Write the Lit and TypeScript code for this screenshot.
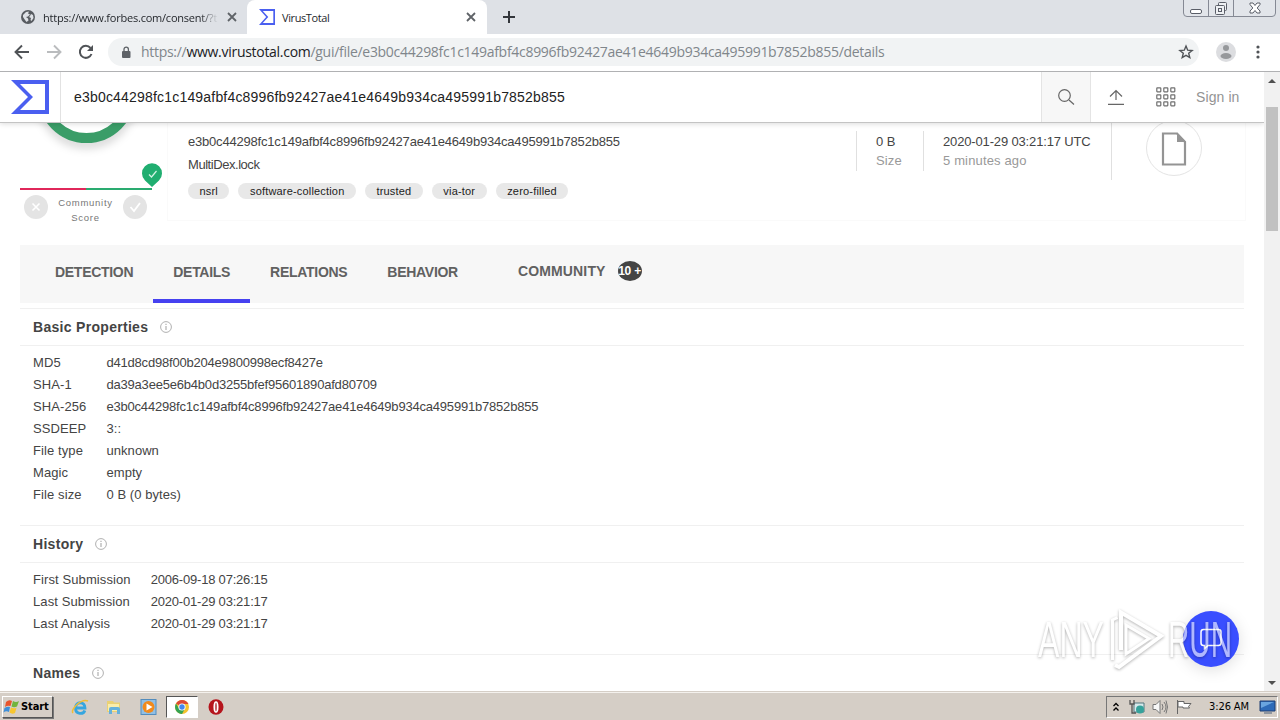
import { LitElement, css, html, svg } from 'lit';
import { customElement, property } from 'lit/decorators.js';

const HASH = 'e3b0c44298fc1c149afbf4c8996fb92427ae41e4649b934ca495991b7852b855';

const infoIcon = html`
  <svg class="info" width="12" height="12" viewBox="0 0 12 12" fill="none" stroke="#b0b0b0">
    <circle cx="6" cy="6" r="5.4" />
    <path d="M6 5v4M6 2.8v1.2" stroke-width="1.2" />
  </svg>
`;

const sigma = (width: number, height: number) => html`
  <svg width=${width} height=${height} viewBox="0 0 38 34" preserveAspectRatio="none">
    <path fill="#4a5ff0" fill-rule="evenodd" d="M0 0H38V34H0L17 17ZM9 4L22 17L9 30H34V4Z" />
  </svg>
`;

@customElement('browser-bar')
class BrowserBar extends LitElement {
  static styles = css`
    :host {
      display: block;
      height: 72px;
      font-family: 'Open Sans', 'Noto Sans', sans-serif;
      color: #25282d;
    }
    svg {
      display: block;
      flex: none;
    }
    .tabs {
      display: flex;
      height: 34px;
      background: #dee1e6;
      overflow: hidden;
      font-size: 11px;
    }
    .tab {
      display: flex;
      align-items: center;
      box-sizing: border-box;
      height: 34px;
    }
    .first {
      width: 247px;
      padding-left: 21px;
    }
    .first .name {
      width: 175px;
      margin: 0 9px 0 8px;
      white-space: nowrap;
      letter-spacing: -0.22px;
      mask-image: linear-gradient(90deg, #000 90%, transparent);
    }
    .active {
      width: 240px;
      padding-left: 12px;
      background: #fff;
      border-radius: 8px 8px 0 0;
    }
    .active .name {
      width: 177px;
      margin: 0 7px 0 7px;
      letter-spacing: -0.4px;
    }
    .plus {
      margin: 11px 0 0 16px;
    }
    .controls {
      display: flex;
      box-sizing: border-box;
      margin: -2px 4px 0 auto;
      width: 93px;
      height: 19px;
      border: 1px solid #858994;
      border-radius: 0 0 4px 4px;
      background: #e2e5ea;
    }
    .controls span {
      display: flex;
      align-items: center;
      justify-content: center;
      width: 24px;
      border-right: 1px solid #858994;
    }
    .controls span:last-child {
      flex: 1;
      border: 0;
    }
    .toolbar {
      display: flex;
      align-items: center;
      box-sizing: border-box;
      height: 38px;
      padding: 0 12px 1px 14px;
      background: #fff;
      border-bottom: 1px solid #b0b1b3;
    }
    .toolbar > svg {
      margin-right: 16px;
    }
    .toolbar > .reload {
      margin-right: 14px;
    }
    .address {
      display: flex;
      align-items: center;
      box-sizing: border-box;
      width: 1095px;
      height: 28px;
      padding: 0 5px 0 13px;
      border-radius: 14px;
      background: #f1f3f4;
      font-size: 14px;
      color: #80868b;
    }
    .url {
      flex: 1;
      margin-left: 10px;
      padding-bottom: 2px;
      white-space: nowrap;
      letter-spacing: -0.29px;
    }
    .url b {
      font-weight: 400;
      color: #202124;
    }
    .toolbar > .avatar {
      margin: 0 17px 0 17px;
    }
    .toolbar > .dots {
      margin: 0 0 0 -5px;
    }
  `;

  render() {
    const close = html`
      <svg width="10" height="10" viewBox="0 0 10 10" stroke="#5f6368" stroke-width="1.8">
        <path d="M1 1l8 8M9 1l-8 8" />
      </svg>
    `;
    return html`
      <div class="tabs">
        <div class="tab first">
          <svg width="14" height="14" viewBox="0 0 14 14">
            <circle cx="7" cy="7" r="7" fill="#585c61" />
            <path fill="#dee1e6" d="M2 5l3-3 3-.5-1 2 2 1-2 2-2 .5 2 1.500.5 2-2 1.500-1.500-2L2 7zM10 4l2 1 .5 3-2 3-1-1 .5-2-2-1 1-1z" />
          </svg>
          <span class="name">https://www.forbes.com/consent/?t</span>
          ${close}
        </div>
        <div class="tab active">
          ${sigma(16, 16)}
          <span class="name">VirusTotal</span>
          ${close}
        </div>
        <svg class="plus" width="12" height="12" viewBox="0 0 12 12" stroke="#33363b" stroke-width="2">
          <path d="M6 0v12M0 6h12" />
        </svg>
        <div class="controls">
          <span>
            <svg width="14" height="16" viewBox="0 0 14 16" fill="#fff" stroke="#5a5e68">
              <rect x="1.500" y="9.500" width="11" height="4" rx="1.500" />
            </svg>
          </span>
          <span>
            <svg width="14" height="16" viewBox="0 0 14 16" fill="#eef0f3" stroke="#5a5e68">
              <rect x="4.500" y="2.500" width="8" height="8" rx="1" />
              <rect x="1.500" y="5.500" width="9" height="9" rx="1" />
              <rect x="4.500" y="8.500" width="3" height="3" />
            </svg>
          </span>
          <span>
            <svg width="14" height="16" viewBox="0 0 14 16" fill="#fff" stroke="#5a5e68">
              <path d="M2 3h3l2 2.500L9 3h3v1.500L9.200 8l2.800 3v2H9l-2-2.500L5 13H2v-2l2.800-3L2 4.500z" />
            </svg>
          </span>
        </div>
      </div>
      <div class="toolbar">
        <svg width="16" height="16" viewBox="0 0 16 16" fill="none" stroke="#505357" stroke-width="1.900">
          <path d="M15 8H2M8 1.500L1.500 8L8 14.500" />
        </svg>
        <svg width="16" height="16" viewBox="0 0 16 16" fill="none" stroke="#babcbe" stroke-width="1.900">
          <path d="M1 8h13M8 1.500L14.500 8L8 14.500" />
        </svg>
        <svg class="reload" width="16" height="16" viewBox="0 0 16 16" fill="none" stroke="#505357" stroke-width="2">
          <path d="M13.500 10A6 6 0 1 1 12.500 4" />
          <path d="M9 7h6V1z" fill="#505357" stroke="none" />
        </svg>
        <div class="address">
          <svg width="10" height="13" viewBox="0 0 10 13">
            <rect x="1" y="5" width="8.500" height="7" rx="1" fill="#5f6368" />
            <path d="M3 5V3.300a2.200 2.200 0 0 1 4.400 0V5" fill="none" stroke="#5f6368" stroke-width="1.300" />
          </svg>
          <span class="url">https://<b>www.virustotal.com</b>/gui/file/${HASH}/details</span>
          <svg width="16" height="16" viewBox="0 0 16 16" fill="none" stroke="#505357" stroke-width="1.400">
            <path d="M8 2l1.700 4.200 4.400.3-3.400 2.800 1.100 4.300L8 11.300l-3.800 2.300 1.100-4.300L1.900 6.500l4.400-.3z" />
          </svg>
        </div>
        <svg class="avatar" width="20" height="20" viewBox="0 0 20 20">
          <circle cx="10" cy="10" r="10" fill="#dcdde0" />
          <circle cx="10" cy="6" r="3" fill="#96989b" />
          <ellipse cx="10" cy="14" rx="5.500" ry="3" fill="#96989b" />
        </svg>
        <svg class="dots" width="20" height="16" viewBox="0 0 20 16" fill="#505357">
          <circle cx="10" cy="3" r="1.600" />
          <circle cx="10" cy="8" r="1.600" />
          <circle cx="10" cy="13" r="1.600" />
        </svg>
      </div>
    `;
  }
}

@customElement('search-header')
class SearchHeader extends LitElement {
  static styles = css`
    :host {
      display: flex;
      box-sizing: border-box;
      height: 51px;
      background: #fff;
      border-bottom: 1px solid #c4c4c4;
      box-shadow: 0 1px 5px rgba(0, 0, 0, 0.14);
      position: relative;
      font-family: 'Liberation Sans', Arial, sans-serif;
    }
    svg {
      display: block;
    }
    .logo {
      box-sizing: border-box;
      width: 61px;
      padding: 8px 0 0 11px;
      border-right: 1px solid #e2e2e2;
    }
    .query {
      flex: 1;
      padding-left: 13px;
      font-size: 14px;
      line-height: 50px;
      letter-spacing: 0.19px;
      color: #222;
    }
    .search {
      display: flex;
      align-items: center;
      justify-content: center;
      width: 48px;
      background: #f7f7f7;
      border: solid #e4e4e4;
      border-width: 0 1px;
    }
    .actions {
      display: flex;
      align-items: center;
      width: 173px;
      font-size: 14px;
      letter-spacing: 0.1px;
      color: #939393;
    }
    .upload {
      margin-left: 17px;
    }
    .apps {
      margin: 0 20px 0 32px;
    }
  `;

  render() {
    const cells = [0, 1, 2].flatMap((row) => [0, 1, 2].map((col) => ({ x: col * 7 + 0.5, y: row * 7 + 0.5 })));
    return html`
      <div class="logo">${sigma(38, 34)}</div>
      <div class="query">${HASH}</div>
      <div class="search">
        <svg width="18" height="18" viewBox="0 0 18 18" fill="none" stroke="#666" stroke-width="1.200">
          <circle cx="7.500" cy="7.500" r="5.800" />
          <path d="M12 12l5 4.500" />
        </svg>
      </div>
      <div class="actions">
        <svg class="upload" width="16" height="16" viewBox="0 0 16 16" fill="none" stroke="#666" stroke-width="1.200">
          <path d="M8 11V1.500M2 7.500l6-6 6 6M0 15.400h16" />
        </svg>
        <svg class="apps" width="20" height="20" viewBox="0 0 20 20" fill="none" stroke="#707070" stroke-width="1.200">
          ${cells.map((c) => svg`<rect x=${c.x + 0.3} y=${c.y + 0.3} width="4" height="4" rx=".5" />`)}
        </svg>
        <span>Sign in</span>
      </div>
    `;
  }
}

@customElement('file-summary')
class FileSummary extends LitElement {
  static styles = css`
    :host {
      display: flex;
      height: 122px;
      padding-left: 20px;
      font-family: 'Liberation Sans', Arial, sans-serif;
      font-size: 13px;
      color: #444;
    }
    svg {
      display: block;
    }
    .score {
      width: 147px;
    }
    .bar {
      display: flex;
      align-items: flex-start;
      justify-content: space-between;
      width: 123px;
      padding: 4px 0 0 4px;
      font-size: 9.5px;
      line-height: 15px;
      letter-spacing: 0.72px;
      text-align: center;
      color: #777;
    }
    .card {
      display: flex;
      box-sizing: border-box;
      width: 1079px;
      height: 98px;
      padding-left: 20px;
      border: 1px solid #fafafa;
      border-top: 0;
    }
    .names {
      flex: 1;
      padding-top: 10px;
      line-height: 17px;
    }
    .hash {
      letter-spacing: -0.2px;
    }
    .file {
      margin-top: 6px;
      letter-spacing: -0.45px;
    }
    .tags {
      display: flex;
      gap: 9px;
      margin-top: 10px;
    }
    .tag {
      padding: 0 11.5px;
      border-radius: 8px;
      background: #e8e8e8;
      font-size: 11px;
      line-height: 16px;
      letter-spacing: 0.18px;
      color: #222;
    }
    .fact {
      box-sizing: border-box;
      height: 40px;
      margin-top: 8px;
      padding: 1px 0 0 19px;
      border-left: 1px solid #e0e0e0;
      line-height: 19px;
    }
    .fact div + div {
      color: #999;
      letter-spacing: 0.15px;
    }
    .size {
      width: 67px;
    }
    .date {
      width: 188px;
      letter-spacing: -0.15px;
    }
    .kind {
      box-sizing: border-box;
      width: 134px;
      height: 57px;
      padding-left: 34px;
      border-left: 1px solid #e0e0e0;
    }
  `;

  render() {
    const tags = ['nsrl', 'software-collection', 'trusted', 'via-tor', 'zero-filled'];
    return html`
      <div class="score">
        <svg width="147" height="68" viewBox="20 123 147 68">
          <defs>
            <filter id="soft" x="-20%" y="-20%" width="140%" height="140%">
              <feGaussianBlur stdDeviation="4" />
            </filter>
          </defs>
          <circle cx="86.500" cy="99" r="45" fill="none" stroke="#000" stroke-opacity=".16" stroke-width="9" filter="url(#soft)" />
          <circle cx="86.500" cy="94" r="44" fill="#fff" stroke="#3a9d68" stroke-width="10" />
          <path d="M20 189h66" stroke="#e0275a" stroke-width="2" />
          <path d="M86 189h66" stroke="#2aab70" stroke-width="2" />
          <path d="M152 187l-7-6.500a10 10 0 1 1 14 0z" fill="#20ae70" />
          <path d="M149 174.500l2.500 2.500 5-6" fill="none" stroke="#d5f3e4" stroke-width="1.200" />
        </svg>
        <div class="bar">
          <svg width="24" height="24" viewBox="0 0 24 24" stroke="#fff" stroke-width="1.600">
            <circle cx="12" cy="12" r="12" fill="#e4e4e4" stroke="none" />
            <path d="M8.500 8.500l7 7M15.500 8.500l-7 7" />
          </svg>
          <div>Community<br />Score</div>
          <svg width="24" height="24" viewBox="0 0 24 24" fill="none" stroke="#fff" stroke-width="1.800">
            <circle cx="12" cy="12" r="12" fill="#e4e4e4" stroke="none" />
            <path d="M7.500 12l3.500 4 6-8" />
          </svg>
        </div>
      </div>
      <div class="card">
        <div class="names">
          <div class="hash">${HASH}</div>
          <div class="file">MultiDex.lock</div>
          <div class="tags">${tags.map((tag) => html`<span class="tag">${tag}</span>`)}</div>
        </div>
        <div class="fact size">
          <div>0 B</div>
          <div>Size</div>
        </div>
        <div class="fact date">
          <div>2020-01-29 03:21:17 UTC</div>
          <div>5 minutes ago</div>
        </div>
        <div class="kind">
          <svg width="56" height="54" viewBox="0 2 56 54" fill="none">
            <circle cx="28" cy="27" r="27.500" stroke="#e4e4e4" />
            <path d="M17 12.500h14l8 8.500v22.500H17z" stroke="#949494" stroke-width="2.200" />
            <path d="M31 11.500v9.500h9z" fill="#949494" />
          </svg>
        </div>
      </div>
    `;
  }
}

@customElement('detail-section')
class DetailSection extends LitElement {
  static styles = css`
    :host {
      display: block;
      margin: 0 20px;
      font-family: 'Liberation Sans', Arial, sans-serif;
      font-size: 13px;
      color: #444;
    }
    h2 {
      display: flex;
      align-items: center;
      gap: 12px;
      box-sizing: border-box;
      height: 38px;
      margin: 0;
      padding-left: 13px;
      border: solid #f0f0f0;
      border-width: 1px 0;
      font-size: 14px;
      letter-spacing: 0.3px;
    }
    dl {
      display: grid;
      grid-template-columns: max-content 1fr;
      column-gap: 20px;
      grid-auto-rows: 22px;
      margin: 0;
      padding: 6px 13px 19px;
      line-height: 22px;
    }
    dt {
      letter-spacing: 0.1px;
    }
    dd {
      margin: 0;
      letter-spacing: 0.06px;
    }
    dd.hash,
    dd.date {
      letter-spacing: -0.2px;
    }
  `;

  @property() heading = '';
  @property() kind = '';
  @property({ attribute: false }) rows: string[][] = [];

  render() {
    return html`
      <h2>${this.heading} ${infoIcon}</h2>
      <dl>
        ${this.rows.map(
          ([label, value]) => html`
            <dt>${label}</dt>
            <dd class=${value.length > 30 ? 'hash' : this.kind}>${value}</dd>
          `
        )}
      </dl>
    `;
  }
}

@customElement('task-bar')
class TaskBar extends LitElement {
  static styles = css`
    :host {
      display: flex;
      align-items: center;
      box-sizing: border-box;
      height: 28px;
      padding: 0 2px;
      background: #d5cec6;
      border-top: 1px solid #f4f1ed;
      box-shadow: 0 -1px #d5cec6;
      position: relative;
      font-family: 'DejaVu Sans Condensed', 'DejaVu Sans', sans-serif;
      font-size: 11px;
      color: #000;
    }
    svg {
      display: block;
      flex: none;
    }
    .start {
      display: flex;
      align-items: center;
      gap: 1px;
      box-sizing: border-box;
      width: 51px;
      height: 22px;
      padding-left: 0;
      border: 1px solid;
      border-color: #fff #555 #555 #fff;
      box-shadow: 1px 1px #777;
      font-weight: 700;
      letter-spacing: -0.1px;
    }
    .icons {
      display: flex;
      align-items: center;
      margin-left: 10px;
    }
    .slot {
      display: flex;
      justify-content: center;
      box-sizing: border-box;
      width: 34px;
      padding: 2px 0;
    }
    .pressed {
      width: 32px;
      margin: 0 1px;
      background: #fff;
      border: 1px solid;
      border-color: #555 #fff #fff #555;
    }
    .tray {
      display: flex;
      align-items: center;
      box-sizing: border-box;
      width: 172px;
      height: 22px;
      margin-left: auto;
      padding-left: 6px;
      border: 1px solid;
      border-color: #777 #fff #fff #777;
    }
    .time {
      flex: 1;
      padding-left: 16px;
      white-space: nowrap;
      letter-spacing: -0.1px;
    }
  `;

  render() {
    return html`
      <div class="start">
        <svg width="17" height="16" viewBox="0 0 17 16">
          <path fill="#e8552d" d="M3 3q3-3 6-1L7.500 7q-3-1-5.500 1z" />
          <path fill="#72b43c" d="M10 2q3 2 6 0l-2 5.500q-3 1.500-5.500 0z" />
          <path fill="#3e8fd9" d="M1.500 9q3-2 5.500-1L6 13q-3-1.500-5.500.5z" />
          <path fill="#f7c62f" d="M8 8.500q3 1.500 5.500.2L12 14q-3 1.500-5.500-.5z" />
        </svg>
        Start
      </div>
      <div class="icons">
        <div class="slot">
          <svg width="18" height="16" viewBox="0 0 18 16" fill="none">
            <path d="M4.500 9h9.500c0-7-9.500-7-9.500 0s8 6.500 9.300 2.500" stroke="#36a6df" stroke-width="2.800" />
            <path d="M2 14C-1 11 10-1 17 2" stroke="#f0bd35" stroke-width="1.500" />
          </svg>
        </div>
        <div class="slot">
          <svg width="18" height="16" viewBox="0 0 18 16">
            <path d="M2 2h6l1 1.500h6V13H2z" fill="#ead174" />
            <path d="M3 5h11v7H3z" fill="#faedab" />
            <path d="M4 15v-5q0-2 2-2h7q2 0 2 2v5h-3v-4H7v4z" fill="#65b1dc" />
          </svg>
        </div>
        <div class="slot">
          <svg width="17" height="16" viewBox="0 0 17 16">
            <rect x="1" y=".5" width="15" height="15" fill="#90bfe5" stroke="#538cbc" />
            <circle cx="8.500" cy="8" r="6" fill="#f18a1c" />
            <path d="M6.500 4.500l6 3.500-6 3.500z" fill="#fff" />
          </svg>
        </div>
        <div class="slot pressed">
          <svg width="16" height="16" viewBox="0 0 16 16">
            <circle cx="8" cy="8" r="7" fill="#f4c22e" />
            <path d="M8 8L2 4.500a7 7 0 0 1 12.200 0L14.400 5H8z" fill="#dd4937" />
            <path d="M2 4.500A7 7 0 0 0 8 15l3-5.500H5z" fill="#34a353" />
            <circle cx="8" cy="8" r="3.600" fill="#fff" />
            <circle cx="8" cy="8" r="2.700" fill="#4587ed" />
          </svg>
        </div>
        <div class="slot">
          <svg width="16" height="16" viewBox="0 0 16 16">
            <ellipse cx="8" cy="8" rx="7.500" ry="7.800" fill="#b5141c" />
            <ellipse cx="8" cy="8" rx="1.800" ry="5" fill="#c5656a" stroke="#fff" stroke-width="1.500" />
          </svg>
        </div>
      </div>
      <div class="tray">
        <svg width="6" height="10" viewBox="0 0 6 10" fill="none" stroke="#000" stroke-width="1.300">
          <path d="M.5 4L3 1.500 5.500 4M.5 8.500L3 6l2.500 2.500" />
        </svg>
        <svg width="26" height="16" viewBox="-10 0 26 16">
          <path d="M5 4h10v9H5z" fill="#d6e9eb" stroke="#53777e" />
          <path d="M1 1v4h4V1M3 5v9h4" fill="none" stroke="#555" stroke-width="1.300" />
          <circle cx="11" cy="10.500" r="4" fill="#35a29b" />
        </svg>
        <svg width="25" height="16" viewBox="-7 0 25 16" fill="none" stroke="#777">
          <path d="M1 5.500h3l4-4v13l-4-4H1z" fill="#f7f7f7" />
          <path d="M10 5q2 3 0 6M12 3q4 5 0 10M14 1.500q3 6.500 0 13" />
        </svg>
        <svg width="23" height="16" viewBox="-6 0 23 16" stroke="#666">
          <path d="M1.500 1v14M2 2.500h6v2h7l-2.500 3 1 1.500H7V8H2z" fill="#fff" />
        </svg>
        <span class="time">3:26 AM</span>
        <svg width="18" height="16" viewBox="0 0 18 16">
          <path d="M1 2h15v10H1z" fill="#2e6bb8" stroke="#1e3f72" />
          <path d="M2 3h13L2 9z" fill="#6aa5df" />
          <path d="M5 14h8" stroke="#4b5e78" />
        </svg>
      </div>
    `;
  }
}

@customElement('app-root')
class AppRoot extends LitElement {
  static styles = css`
    :host {
      display: block;
      position: relative;
      width: 1280px;
      height: 720px;
      overflow: hidden;
      background: #fff;
      font-family: 'Liberation Sans', Arial, sans-serif;
    }
    .window {
      display: flex;
      height: 620px;
    }
    .page {
      width: 1264px;
      overflow: hidden;
    }
    .scroll {
      display: flex;
      flex-direction: column;
      align-items: center;
      box-sizing: border-box;
      width: 16px;
      padding: 6px 0;
      background: #f1f1f1;
    }
    .thumb {
      width: 12px;
      height: 124px;
      margin: 24px 0 auto;
      background: #c1c1c1;
    }
    nav {
      display: flex;
      box-sizing: border-box;
      height: 58px;
      margin: 0 20px 5px;
      padding-left: 15px;
      background: #f7f7f7;
      color: #616161;
      font-size: 14px;
      font-weight: 700;
      line-height: 54px;
      letter-spacing: -0.29px;
    }
    nav a {
      box-sizing: border-box;
      padding: 0 20px;
    }
    nav .current {
      border-bottom: 4px solid #4641f0;
    }
    nav .community {
      display: flex;
      align-items: center;
      height: 52px;
      margin-left: 20px;
      letter-spacing: 0.15px;
    }
    .badge {
      width: 24px;
      height: 20px;
      margin-left: 12px;
      border-radius: 50%;
      background: #444;
      color: #fff;
      font-size: 12px;
      line-height: 20px;
      letter-spacing: -0.2px;
      text-align: center;
      white-space: nowrap;
    }
    .chat {
      position: absolute;
      left: 1183px;
      top: 611px;
      display: flex;
      align-items: center;
      justify-content: center;
      width: 56px;
      height: 56px;
      border-radius: 50%;
      background: #394eff;
      box-shadow: 0 3px 16px rgba(0, 0, 0, 0.13);
    }
    .mark {
      position: absolute;
      left: 1030px;
      top: 600px;
      overflow: visible;
      font-family: 'Liberation Sans', Arial, sans-serif;
      filter: drop-shadow(0 1px 1.5px rgba(0, 0, 0, 0.5));
      opacity: 0.6;
    }
  `;

  render() {
    const basics = [
      ['MD5', 'd41d8cd98f00b204e9800998ecf8427e'],
      ['SHA-1', 'da39a3ee5e6b4b0d3255bfef95601890afd80709'],
      ['SHA-256', HASH],
      ['SSDEEP', '3::'],
      ['File type', 'unknown'],
      ['Magic', 'empty'],
      ['File size', '0 B (0 bytes)'],
    ];
    const history = [
      ['First Submission', '2006-09-18 07:26:15'],
      ['Last Submission', '2020-01-29 03:21:17'],
      ['Last Analysis', '2020-01-29 03:21:17'],
    ];
    return html`
      <browser-bar></browser-bar>
      <div class="window">
        <div class="page">
          <search-header></search-header>
          <file-summary></file-summary>
          <nav>
            <a>DETECTION</a>
            <a class="current">DETAILS</a>
            <a>RELATIONS</a>
            <a>BEHAVIOR</a>
            <a class="community">COMMUNITY <span class="badge">10 +</span></a>
          </nav>
          <detail-section heading="Basic Properties" .rows=${basics}></detail-section>
          <detail-section heading="History" kind="date" .rows=${history}></detail-section>
          <detail-section heading="Names"></detail-section>
        </div>
        <div class="scroll">
          <svg width="8" height="5" viewBox="0 0 8 5"><path d="M0 5l4-4 4 4z" fill="#505050" /></svg>
          <div class="thumb"></div>
          <svg width="8" height="5" viewBox="0 0 8 5"><path d="M0 0l4 4 4-4z" fill="#505050" /></svg>
        </div>
      </div>
      <task-bar></task-bar>
      <div class="chat">
        <svg width="24" height="24" viewBox="0 0 24 24" fill="none" stroke="#fff" stroke-width="1.500">
          <path d="M4.500 2.500h15q2.500 0 2.500 2.500v11q0 2.500-2.500 2.500H9l-3.500 3v-3h-1Q2 18.500 2 16V5q0-2.500 2.500-2.500z" />
        </svg>
      </div>
      <svg class="mark" width="210" height="90" viewBox="0 0 210 90" fill="#fff">
        <text x="8" y="57" font-size="50" textLength="66" lengthAdjust="spacingAndGlyphs">ANY</text>
        <path d="M82.500 60V20l5-2.500" fill="none" stroke="#fff" stroke-width="3" />
        <path d="M91 50V12.500l40 23.500-42 31-4-2" fill="none" stroke="#fff" stroke-width="4" />
        <path d="M96 54V25l23 13.500z" fill="none" stroke="#fff" stroke-width="3" />
        <text x="138" y="57" font-size="50" textLength="64" lengthAdjust="spacingAndGlyphs">RUN</text>
      </svg>
    `;
  }
}
